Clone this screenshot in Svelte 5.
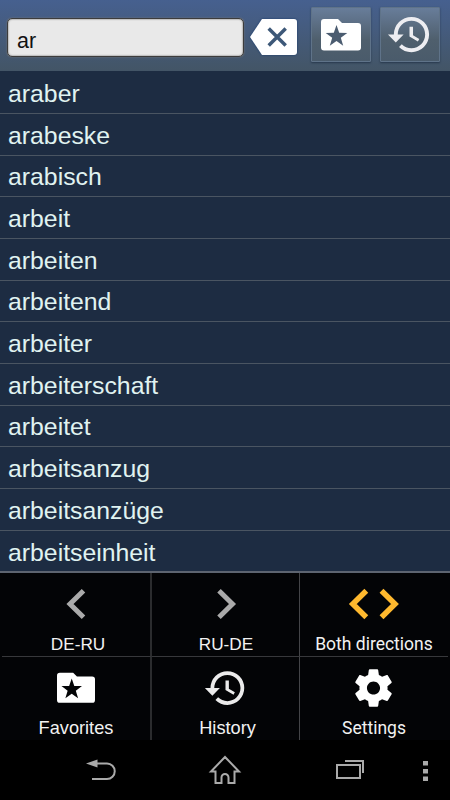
<script lang="ts">
  let query = "ar";

  const words = [
    "araber",
    "arabeske",
    "arabisch",
    "arbeit",
    "arbeiten",
    "arbeitend",
    "arbeiter",
    "arbeiterschaft",
    "arbeitet",
    "arbeitsanzug",
    "arbeitsanzüge",
    "arbeitseinheit",
  ];

  const historyPath =
    "M13 3a9 9 0 0 0-9 9H1l4 4.1L9 12H6c0-3.87 3.13-7 7-7s7 3.13 7 7-3.13 7-7 7c-1.93 0-3.68-.79-4.94-2.06l-1.42 1.42A8.95 8.95 0 0 0 13 21a9 9 0 0 0 0-18zm-1 5v5l4.28 2.54.72-1.21-3.2-1.98V8z";
  const folderPath =
    "M3 0h14l4 4h16a3 3 0 0 1 3 3v21.500a3 3 0 0 1-3 3H3a3 3 0 0 1-3-3V3a3 3 0 0 1 3-3z";
  const starPath =
    "M15.500 6l2.700 7.800 8.100.1-6.500 4.900 2.400 7.900-6.700-4.700-6.700 4.700 2.400-7.900-6.500-4.900 8.100-.1z";
</script>

<div class="screen">
  <header class="toolbar">
    <input class="search" type="text" aria-label="Search" bind:value={query} />
    <button class="clear" aria-label="Clear">
      <svg width="48" height="36" viewBox="0 0 48 36">
        <path d="M12 0h32a3 3 0 0 1 3 3v30a3 3 0 0 1-3 3H12L0 18z" fill="#fff" />
        <path d="M18.700 9.500l17 17M35.700 9.500l-17 17" stroke="#3d5878" stroke-width="3.500" />
      </svg>
    </button>
    <button class="tool" aria-label="Favorites">
      <svg width="40" height="32" viewBox="0 0 40 32">
        <path d={folderPath} fill="#fff" />
        <path d={starPath} fill="#4b5c70" />
      </svg>
    </button>
    <button class="tool" aria-label="History">
      <svg class="tool-history" width="47" height="47" viewBox="0 0 24 24">
        <path d={historyPath} fill="#ededf1" />
      </svg>
    </button>
  </header>

  <ul class="words">
    {#each words as word}
      <li>{word}</li>
    {/each}
  </ul>

  <div class="menu">
    <button class="item">
      <svg width="62" height="46" viewBox="0 0 62 46">
        <path d="M38.500 9.700L25 23l13.500 13.300" class="chevron" />
      </svg>
      <span class="label code from">DE-RU</span>
    </button>
    <button class="item">
      <svg width="62" height="46" viewBox="0 0 62 46">
        <path d="M24 9.700L37.500 23 24 36.300" class="chevron" />
      </svg>
      <span class="label code to">RU-DE</span>
    </button>
    <button class="item">
      <svg width="62" height="46" viewBox="0 0 62 46">
        <path d="M23.300 9.700L9.800 23l13.500 13.300M38.500 9.700L52 23 38.500 36.300" class="chevron active" />
      </svg>
      <span class="label roboto">Both directions</span>
    </button>
    <button class="item">
      <svg width="38" height="46" viewBox="0 -8 40 48">
        <path d={folderPath} fill="#fff" />
        <path d={starPath} fill="#030406" />
      </svg>
      <span class="label">Favorites</span>
    </button>
    <button class="item">
      <svg width="45" height="46" viewBox="0 0 24 24">
        <path d={historyPath} fill="#ebebeb" />
      </svg>
      <span class="label history">History</span>
    </button>
    <button class="item">
      <svg class="gear" width="45" height="46" viewBox="0 0 24 24">
        <path
          fill="#fff"
          d="M19.430 12.980c.04-.32.07-.64.07-.98s-.03-.66-.07-.98l2.110-1.650c.19-.15.24-.42.12-.64l-2-3.460c-.12-.22-.39-.3-.61-.22l-2.490 1c-.52-.4-1.080-.73-1.690-.98l-.38-2.650A.488.488 0 0 0 14 2h-4c-.25 0-.46.180-.49.420l-.38 2.650c-.61.250-1.170.590-1.690.980l-2.490-1c-.23-.09-.49 0-.61.220l-2 3.460c-.13.220-.07.490.12.640l2.110 1.650c-.04.320-.07.650-.07.980s.03.660.07.980l-2.110 1.650c-.19.150-.24.420-.12.640l2 3.460c.12.220.39.300.61.220l2.490-1c.52.400 1.080.730 1.690.980l.38 2.650c.03.240.24.420.49.420h4c.25 0 .46-.18.49-.42l.38-2.650c.61-.25 1.170-.59 1.690-.98l2.490 1c.23.090.49 0 .61-.22l2-3.460c.12-.22.07-.49-.12-.64l-2.110-1.650zM12 15.500c-1.930 0-3.500-1.570-3.500-3.500s1.570-3.500 3.500-3.500 3.500 1.570 3.500 3.500-1.570 3.500-3.500 3.500z"
        />
      </svg>
      <span class="label roboto">Settings</span>
    </button>
  </div>

  <nav class="navbar">
    <button aria-label="Back">
      <svg width="32" height="32" viewBox="0 0 32 32">
        <path d="M10 9.500h13a7.500 7.500 0 0 1 0 15.500H8" class="line" />
        <path d="M2 9.500L13.500 5.500v8z" fill="#aaa" />
      </svg>
    </button>
    <button class="home" aria-label="Home">
      <svg width="36" height="32" viewBox="0 0 36 32">
        <path d="M18 3L4 17.500h4.500v11.500h6v-5.500a3.500 3.500 0 0 1 7 0V29h6V17.500H32z" class="line" />
      </svg>
    </button>
    <button class="recent" aria-label="Recent apps">
      <svg width="32" height="32" viewBox="0 0 32 32">
        <path d="M3 11h23v13H3zM11 7h18v12" class="line" />
      </svg>
    </button>
    <button class="more" aria-label="More">
      <svg width="10" height="32" viewBox="0 0 10 32">
        <path d="M3 7h5v4.500H3zM3 15h5v4.500H3zM3 22.500h5V27H3z" fill="#aaa" />
      </svg>
    </button>
  </nav>
</div>

<style>
  :global(body) {
    background: #000;
  }

  .screen {
    width: 450px;
    height: 800px;
    overflow: hidden;
    display: flex;
    flex-direction: column;
    font-family: "Liberation Sans", Arial, sans-serif;
  }

  button {
    padding: 0;
    border: none;
    background: none;
    font: inherit;
  }

  svg {
    display: block;
  }

  .toolbar {
    box-sizing: border-box;
    flex: none;
    height: 71px;
    padding: 7px 10px 0 7px;
    display: flex;
    align-items: flex-start;
    background: linear-gradient(#46608f, #435566);
  }

  .search {
    box-sizing: border-box;
    width: 237px;
    height: 39px;
    margin: 11px 6px 0 0;
    padding: 7px 9px 0;
    border: 1px solid #3c3c3c;
    border-radius: 5px;
    outline: none;
    background: #e9e9e9;
    box-shadow: inset 0 0 2px #555, 0 0 2px #777;
    color: #111;
    font: 21.500px "Liberation Sans", Arial, sans-serif;
  }

  .clear {
    margin: 12px 13px 0 0;
    filter: drop-shadow(0 0 1px #173a6c);
  }

  .tool {
    box-sizing: border-box;
    width: 60px;
    height: 55px;
    margin-right: 9px;
    display: flex;
    align-items: center;
    justify-content: center;
    border: 1px solid #5f7389;
    border-radius: 1px;
    background: linear-gradient(#687d9a, #4f5f6d 60%, #4a5b6b);
    box-shadow: 0 1px 2px rgba(20, 35, 55, 0.6);
  }

  .tool:last-child {
    margin-right: 0;
  }

  .tool-history {
    flex: none;
    margin-left: -2px;
  }

  .words {
    box-sizing: border-box;
    flex: none;
    height: 500px;
    margin: 0;
    padding: 1.300px 0 0;
    overflow: hidden;
    list-style: none;
    background: #1d2c42;
  }

  .words li {
    box-sizing: border-box;
    height: 41.700px;
    padding: 0.700px 8px 0;
    border-bottom: 1px solid #4a5562;
    color: #e0f3f1;
    font-size: 24.800px;
    line-height: 41px;
  }

  .words li:last-child {
    border-bottom: none;
  }

  .menu {
    box-sizing: border-box;
    flex: none;
    height: 169px;
    padding: 0 2px;
    display: grid;
    grid-template-columns: 150px 148px 1fr;
    grid-template-rows: 84px 83px;
    border-top: 2px solid #5d6470;
    background: #030406;
  }

  .item {
    display: flex;
    flex-direction: column;
    align-items: center;
    padding-top: 8px;
    border-right: 1px solid #444548;
    color: #f2f2f2;
  }

  .item:nth-child(3n + 1) {
    border-right: 2px solid #2b2c2e;
  }

  .item:nth-child(3n) {
    border-right: none;
  }

  .item:nth-child(-n + 3) {
    border-bottom: 1px solid #37383b;
  }

  .label {
    margin-top: 6px;
    font-size: 18.200px;
    line-height: 22px;
  }

  .code {
    font-size: 17.200px;
  }

  .from {
    padding-left: 4px;
  }

  .to {
    padding-left: 1px;
  }

  .history {
    padding-left: 4px;
  }

  .gear {
    margin-right: 2px;
  }

  .roboto {
    font-family: Roboto, sans-serif;
    font-size: 17.500px;
  }

  .chevron {
    fill: none;
    stroke: #aaa;
    stroke-width: 5;
  }

  .chevron.active {
    stroke: #ffb92e;
    stroke-width: 5.500;
  }

  .navbar {
    flex: 1;
    padding: 14px 0 0 84px;
    display: flex;
    align-items: flex-start;
    background: #000;
  }

  .home,
  .recent {
    margin-left: 91px;
  }

  .more {
    margin-left: 54px;
  }

  .line {
    fill: none;
    stroke: #aaa;
    stroke-width: 2;
  }
</style>
